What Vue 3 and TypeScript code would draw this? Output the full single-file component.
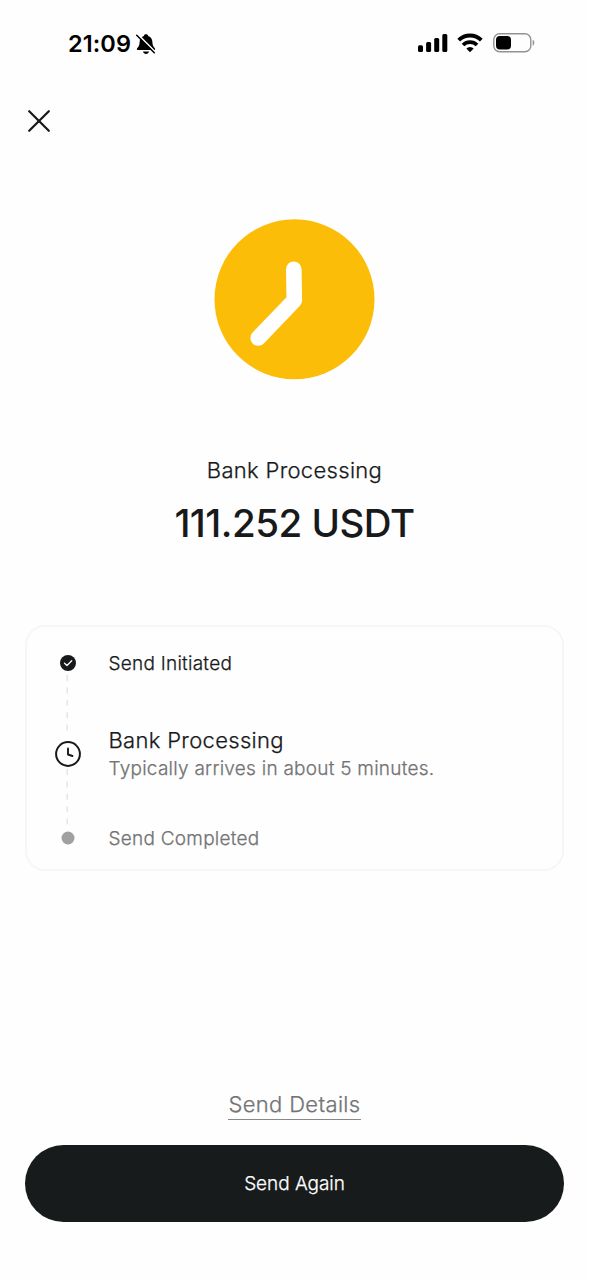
<script setup lang="ts">
interface Step {
  title: string
  note?: string
  state: 'done' | 'active' | 'pending'
}

const steps: Step[] = [
  { title: 'Send Initiated', state: 'done' },
  { title: 'Bank Processing', note: 'Typically arrives in about 5 minutes.', state: 'active' },
  { title: 'Send Completed', state: 'pending' },
]
</script>

<template>
  <main class="screen">
    <header class="status">
      <div class="time-group">
        <span class="time">21:09</span>
        <svg class="bell" width="22" height="22" viewBox="0 0 22 22">
          <path d="M11 1.200c-1.300 0-2 .7-2.200 1.700C5.800 3.900 4.700 6.300 4.600 9.200c-.1 3.100-.9 4.300-2.300 5.700-.8.900-.5 2.100.8 2.100h15.800c1.300 0 1.600-1.200.8-2.100-1.400-1.400-2.200-2.600-2.300-5.700-.1-2.900-1.200-5.300-4.200-6.300C13 1.900 12.300 1.200 11 1.200z" fill="#000" />
          <path d="M8 18.500h6c-.3 1.500-1.500 2.400-3 2.400s-2.700-.9-3-2.400z" fill="#000" />
          <path d="M2.800 1.400 21.600 20.200" stroke="#fefefe" stroke-width="1.700" />
          <path d="M1.700 2.200 19.300 19.800" stroke="#000" stroke-width="1.500" stroke-linecap="round" />
        </svg>
      </div>
      <div class="indicators">
        <svg width="30" height="20" viewBox="0 0 30 20">
          <rect x="0" y="12.300" width="5" height="6.700" rx="1.500" />
          <rect x="8.100" y="9" width="5" height="10" rx="1.500" />
          <rect x="16.200" y="5" width="5" height="14" rx="1.500" />
          <rect x="24.300" y="1" width="5" height="18" rx="1.500" />
        </svg>
        <svg class="wifi" width="26" height="20" viewBox="0 0 26 20">
          <path d="M1.700 7.200a16 16 0 0 1 22.600 0" fill="none" stroke="#000" stroke-width="3.900" />
          <path d="M6 12a9.900 9.900 0 0 1 14 0" fill="none" stroke="#000" stroke-width="3.700" />
          <path d="M13 19.200 9.300 15.500a5.300 5.300 0 0 1 7.400 0z" />
        </svg>
        <svg class="battery" width="42" height="20" viewBox="0 0 42 20">
          <rect x=".8" y=".8" width="37" height="18" rx="5.800" fill="none" stroke="#929292" stroke-width="1.400" />
          <rect x="3" y="3" width="15" height="13.600" rx="4" />
          <path d="M39.700 6.800c2.200.8 2.200 5.200 0 6z" fill="#929292" />
        </svg>
      </div>
    </header>

    <button class="close" aria-label="Close">
      <svg width="22" height="22" viewBox="0 0 22 22">
        <path d="M1.200 1.200 20.800 20.800M20.800 1.200 1.200 20.800" fill="none" stroke="#17191a" stroke-width="2.200" stroke-linecap="round" />
      </svg>
    </button>

    <section class="summary">
      <svg width="161" height="161" viewBox="0 0 161 161">
        <circle cx="80.500" cy="80.300" r="80" fill="#fbbd08" />
        <path d="M79.800 50.300 80.300 81.300 44.200 119" fill="none" stroke="#fff" stroke-width="15.600" stroke-linecap="round" stroke-linejoin="round" />
      </svg>
      <h1 class="stage">Bank Processing</h1>
      <p class="amount">111.252 USDT</p>
    </section>

    <section class="card">
      <div class="rail">
        <svg width="16" height="16" viewBox="0 0 16 16">
          <circle cx="8" cy="8" r="8" fill="#17191a" />
          <path d="M4.500 8.200 7 10.500 11.700 5.700" fill="none" stroke="#fff" stroke-width="1.300" stroke-linecap="round" stroke-linejoin="round" />
        </svg>
        <svg width="16" height="70" viewBox="0 0 16 70">
          <path d="M7.200 4V61" stroke="#e5e5e5" stroke-width="1.500" stroke-dasharray="6 6.400" />
        </svg>
        <svg width="26" height="26" viewBox="0 0 26 26">
          <circle cx="13" cy="13" r="11.900" fill="none" stroke="#17191a" stroke-width="2" />
          <path d="M13 7.500V13.500L17.500 15" fill="none" stroke="#17191a" stroke-width="1.900" stroke-linecap="round" stroke-linejoin="round" />
        </svg>
        <svg width="16" height="64" viewBox="0 0 16 64">
          <path d="M7.200 2V58" stroke="#e5e5e5" stroke-width="1.500" stroke-dasharray="6 6.400" />
        </svg>
        <svg width="14" height="14" viewBox="0 0 14 14">
          <circle cx="7" cy="7" r="6.500" fill="#a0a0a0" />
        </svg>
      </div>
      <div class="steps">
        <div v-for="step in steps" :key="step.title" class="step" :class="step.state">
          <span class="title">{{ step.title }}</span>
          <span v-if="step.note" class="note">{{ step.note }}</span>
        </div>
      </div>
    </section>

    <footer class="actions">
      <a class="details">Send Details</a>
      <button class="again">Send Again</button>
    </footer>
  </main>
</template>

<style>
body { margin: 0; background: #fefefe; }
</style>

<style scoped>
.screen {
  box-sizing: border-box;
  width: 589px;
  height: 1280px;
  display: flex;
  flex-direction: column;
  background: #fefefe;
  color: #17191a;
  font-family: Inter, "Liberation Sans", sans-serif;
  font-weight: 300;
}
svg { display: block; flex: none; }
.status {
  height: 88px;
  box-sizing: border-box;
  padding: 0 54px 0 68px;
  display: flex;
  justify-content: space-between;
  align-items: center;
  color: #000;
}
.time-group, .indicators { display: flex; align-items: center; }
.time { font-size: 23.500px; line-height: 28px; font-weight: 600; width: 67px; letter-spacing: 0.1px; white-space: nowrap; }
.indicators { margin-top: -2px; }
.wifi { margin-left: 9px; }
.battery { margin-left: 10px; }
button { border: 0; padding: 0; font-family: inherit; font-weight: 300; }
.stage, .step, .details, .again { -webkit-text-stroke: 0.25px currentColor; }
.close { width: 22px; height: 22px; margin: 22px 0 0 28px; background: none; }
.summary { display: flex; flex-direction: column; align-items: center; margin-top: 87px; }
.stage { margin: 75px 0 0; font-size: 22px; line-height: 30px; font-weight: 300; letter-spacing: 0.32px; }
.amount { margin: 14px 0 0; font-size: 38.500px; line-height: 48px; font-weight: 500; letter-spacing: -0.5px; }
.card {
  box-sizing: border-box;
  width: 539px;
  height: 246px;
  margin: 78px 0 0 25px;
  border: 2px solid #f6f6f6;
  border-radius: 20px;
  display: flex;
}
.rail { width: 26px; margin: 28px 0 0 27.500px; display: flex; flex-direction: column; align-items: center; }
.steps { margin: 25px 0 0 28px; display: flex; flex-direction: column; }
.step { display: flex; flex-direction: column; font-size: 19px; line-height: 24px; letter-spacing: 0.25px; }
.active { margin-top: 49px; }
.active .title { font-size: 22px; line-height: 31px; letter-spacing: 0.32px; }
.note { line-height: 26px; color: #737373; }
.pending { margin-top: 45px; color: #737373; }
.actions { margin: auto 25px 58px; display: flex; flex-direction: column; align-items: center; }
.details { font-size: 22px; line-height: 29px; letter-spacing: 0.34px; color: #737373; border-bottom: 1.500px solid #888; }
.again { width: 539px; height: 77px; margin-top: 25px; border-radius: 39px; background: #181b1b; color: #fff; font-size: 19px; letter-spacing: -0.05px; }
</style>
